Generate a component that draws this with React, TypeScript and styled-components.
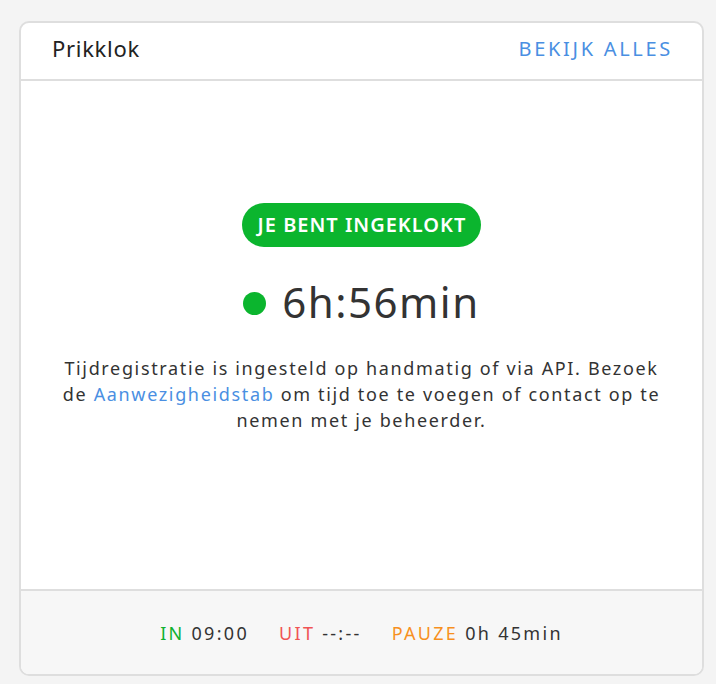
import styled, { createGlobalStyle } from "styled-components";

const green = "#0bb52e";
const blue = "#4a8fe2";
const text = "#333333";
const line = "#dedede";

const GlobalStyle = createGlobalStyle`
  html, body {
    margin: 0;
    padding: 0;
    background: #f4f4f4;
    font-family: "Noto Sans", "Open Sans", sans-serif;
    color: ${text};
  }
`;

const Page = styled.div`
  padding: 21px 12px 12px 19px;
  height: 684px;
  box-sizing: border-box;
`;

const Card = styled.div`
  height: 100%;
  display: flex;
  flex-direction: column;
  background: #fff;
  border: 2px solid ${line};
  border-radius: 10px;
  overflow: hidden;
`;

const Header = styled.div`
  height: 58px;
  display: flex;
  align-items: center;
  justify-content: space-between;
  padding: 0 29px 6px 31px;
  box-sizing: border-box;
  border-bottom: 2px solid ${line};
`;

const Title = styled.div`
  font-size: 22px;
  letter-spacing: 0.7px;
  color: #222;
`;

const ViewAll = styled.a`
  font-size: 20px;
  letter-spacing: 2.7px;
  color: ${blue};
  text-decoration: none;
`;

const Body = styled.div`
  flex: 1;
  display: flex;
  flex-direction: column;
  align-items: center;
  justify-content: center;
  padding: 0 40px 35px;
`;

const Badge = styled.div`
  background: ${green};
  color: #fff;
  font-weight: 600;
  font-size: 20px;
  letter-spacing: 1px;
  height: 44px;
  line-height: 44px;
  padding: 0 15px 0 16px;
  border-radius: 22px;
`;

const Timer = styled.div`
  display: flex;
  align-items: center;
  gap: 16px;
  font-size: 42px;
  line-height: 50px;
  letter-spacing: 1.5px;
  margin: 30px 0 28px;
`;

const Dot = styled.span`
  width: 23px;
  height: 23px;
  margin-top: 3px;
  border-radius: 50%;
  background: ${green};
`;

const Note = styled.p`
  margin: 0;
  max-width: 612px;
  text-align: center;
  font-size: 18px;
  line-height: 26px;
  letter-spacing: 1.65px;
`;

const Link = styled.a`
  color: ${blue};
  text-decoration: none;
`;

const Footer = styled.div`
  height: 85px;
  box-sizing: border-box;
  display: flex;
  align-items: center;
  justify-content: center;
  gap: 30px;
  background: #f7f7f7;
  border-top: 2px solid ${line};
  font-size: 18px;
  letter-spacing: 2.3px;
`;

const Stat = styled.span``;

const Label = styled.span<{ $color: string }>`
  color: ${(p) => p.$color};
`;

export default function App() {
  return (
    <>
      <GlobalStyle />
      <Page>
        <Card>
          <Header>
            <Title>Prikklok</Title>
            <ViewAll href="#">BEKIJK ALLES</ViewAll>
          </Header>
          <Body>
            <Badge>JE BENT INGEKLOKT</Badge>
            <Timer>
              <Dot />
              6h:56min
            </Timer>
            <Note>
              Tijdregistratie is ingesteld op handmatig of via API. Bezoek de{" "}
              <Link href="#">Aanwezigheidstab</Link> om tijd toe te voegen of
              contact op te nemen met je beheerder.
            </Note>
          </Body>
          <Footer>
            <Stat>
              <Label $color="#10b12f">IN</Label> 09:00
            </Stat>
            <Stat>
              <Label $color="#f05454">UIT</Label> --:--
            </Stat>
            <Stat>
              <Label $color="#f7901e">PAUZE</Label> 0h 45min
            </Stat>
          </Footer>
        </Card>
      </Page>
    </>
  );
}
